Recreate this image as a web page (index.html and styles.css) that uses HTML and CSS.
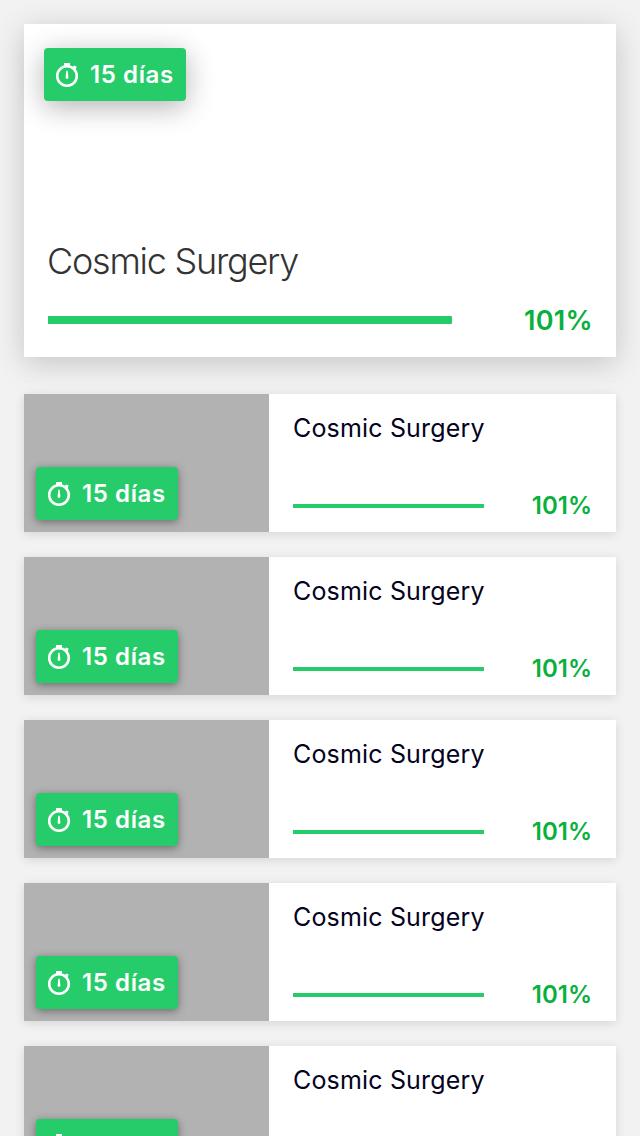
FILE: index.html
```html
<!DOCTYPE html>
<html lang="es">
<head>
<meta charset="utf-8">
<title>Proyectos</title>
<link rel="stylesheet" href="styles.css">
</head>
<body>
<svg class="defs" width="0" height="0">
  <symbol id="timer" viewBox="0 0 26 26">
    <circle cx="13" cy="14" r="9.8" fill="none" stroke="currentColor" stroke-width="2.6"/>
    <path d="M10 1h6v3.5h-6zM18.6 5.5l1.4-1.9 2.6.9-.6 2.2-1 1.4zM12.3 8.8h1.4l.7 6.8a1.4 1.4 0 0 1-2.8 0z" fill="currentColor"/>
  </symbol>
</svg>
<main class="feed">
  <article class="hero">
    <span class="badge"><svg class="icon"><use href="#timer"/></svg>15 días</span>
    <h1 class="hero-title">Cosmic Surgery</h1>
    <div class="progress"><div class="bar"></div><span class="percent">101%</span></div>
  </article>
  <section class="list">
    <article class="card"><div class="thumb"><span class="badge"><svg class="icon"><use href="#timer"/></svg>15 días</span></div><div class="info"><h2 class="title">Cosmic Surgery</h2><div class="progress"><div class="bar"></div><span class="percent">101%</span></div></div></article>
    <article class="card"><div class="thumb"><span class="badge"><svg class="icon"><use href="#timer"/></svg>15 días</span></div><div class="info"><h2 class="title">Cosmic Surgery</h2><div class="progress"><div class="bar"></div><span class="percent">101%</span></div></div></article>
    <article class="card"><div class="thumb"><span class="badge"><svg class="icon"><use href="#timer"/></svg>15 días</span></div><div class="info"><h2 class="title">Cosmic Surgery</h2><div class="progress"><div class="bar"></div><span class="percent">101%</span></div></div></article>
    <article class="card"><div class="thumb"><span class="badge"><svg class="icon"><use href="#timer"/></svg>15 días</span></div><div class="info"><h2 class="title">Cosmic Surgery</h2><div class="progress"><div class="bar"></div><span class="percent">101%</span></div></div></article>
    <article class="card"><div class="thumb"><span class="badge"><svg class="icon"><use href="#timer"/></svg>15 días</span></div><div class="info"><h2 class="title">Cosmic Surgery</h2><div class="progress"><div class="bar"></div><span class="percent">101%</span></div></div></article>
  </section>
</main>
</body>
</html>
```
FILE: styles.css
```css
* { box-sizing: border-box; }
body { margin: 0; height: 1136px; overflow: hidden; background: #f2f2f2; font-family: Inter, sans-serif; }
.defs { display: none; }
.feed { display: flex; flex-direction: column; padding: 24px; }
.hero { display: flex; flex-direction: column; align-items: flex-start; height: 333px; padding: 24px 23px 20px 20px; background: #fff; box-shadow: 0 6px 28px rgba(0,0,0,.19); }
.badge { display: flex; align-items: center; width: 142px; height: 53px; padding-left: 10px; gap: 10px; border-radius: 4px; background: #26cc69; color: #fff; font-size: 24px; font-weight: 600; letter-spacing: .6px; white-space: nowrap; box-shadow: 0 2px 8px rgba(0,0,0,.4); }
.hero .badge { box-shadow: 0 6px 28px rgba(0,0,0,.3); }
.icon { width: 26px; height: 26px; flex: none; }
.hero-title { margin: auto 0 20px 3px; font-size: 36px; line-height: 44px; font-weight: 300; letter-spacing: -1.25px; color: #333; }
.progress { display: flex; align-items: center; justify-content: space-between; color: #08b03c; font-weight: 600; }
.hero .progress { align-self: stretch; height: 34px; margin-left: 4px; font-size: 27px; line-height: 34px; letter-spacing: .3px; }
.hero .percent { padding-top: 1px; margin-bottom: -1px; }
.bar { background: #26cc69; }
.hero .bar { width: 404px; height: 8px; border-radius: 0 1px 1px 0; }
.list { display: flex; flex-direction: column; gap: 25px; margin-top: 23px; padding-top: 12px; border-top: 2px solid #eee; }
.card { display: flex; height: 138px; background: #fff; box-shadow: 0 2px 10px rgba(0,0,0,.12); }
.thumb { display: flex; align-items: flex-end; width: 245px; padding: 12px; background: #b2b2b2; }
.info { display: flex; flex: 1; flex-direction: column; justify-content: space-between; padding: 18px 24px 11px 24px; }
.title { margin: 0; font-size: 25px; line-height: 32px; font-weight: 400; letter-spacing: .17px; color: #030321; white-space: nowrap; }
.card .progress { font-size: 24px; line-height: 30px; }
.card .bar { width: 191px; height: 4px; }
```
